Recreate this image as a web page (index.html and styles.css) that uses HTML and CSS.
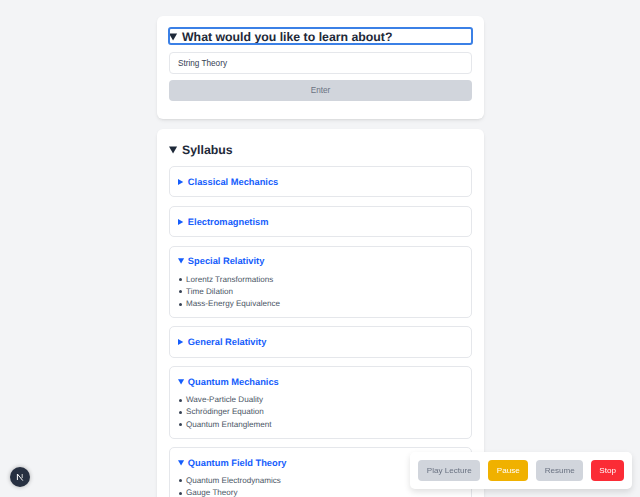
FILE: index.html
```html
<!DOCTYPE html>
<html lang="en">
<head>
<meta charset="utf-8">
<title>Lecture</title>
<link rel="stylesheet" href="styles.css">
</head>
<body>
<main class="page">
  <section class="card">
    <details open class="top">
      <summary class="heading focused">What would you like to learn about?</summary>
      <input class="topic" type="text" value="String Theory" aria-label="Topic">
      <button class="enter" type="button">Enter</button>
    </details>
  </section>
  <section class="card syllabus">
    <details open class="top">
      <summary class="heading">Syllabus</summary>
      <div class="items">
        <details class="item"><summary>Classical Mechanics</summary></details>
        <details class="item"><summary>Electromagnetism</summary></details>
        <details class="item" open><summary>Special Relativity</summary>
          <ul><li>Lorentz Transformations</li><li>Time Dilation</li><li>Mass-Energy Equivalence</li></ul>
        </details>
        <details class="item"><summary>General Relativity</summary></details>
        <details class="item" open><summary>Quantum Mechanics</summary>
          <ul><li>Wave-Particle Duality</li><li>Schrödinger Equation</li><li>Quantum Entanglement</li></ul>
        </details>
        <details class="item" open><summary>Quantum Field Theory</summary>
          <ul><li>Quantum Electrodynamics</li><li>Gauge Theory</li></ul>
        </details>
      </div>
    </details>
  </section>
</main>
<div class="controls">
  <button class="ctl grey" type="button">Play Lecture</button>
  <button class="ctl amber" type="button">Pause</button>
  <button class="ctl grey" type="button">Resume</button>
  <button class="ctl red" type="button">Stop</button>
</div>
<div class="next-badge"><svg width="12" height="12" viewBox="0 0 12 12" aria-hidden="true"><path d="M3.4 9V3L8.8 9.6" fill="none" stroke="#fff" stroke-width="1"/><path d="M8.2 3V7" fill="none" stroke="#d5d5d5" stroke-width="1"/></svg></div>
</body>
</html>
```
FILE: styles.css
```css
* { box-sizing: border-box; }
html, body { margin: 0; height: 497px; overflow: hidden; }
body {
  background: #f3f4f6;
  font-family: "Liberation Sans", Arial, sans-serif;
  color: #1e2939;
  padding-left: 1px;
  text-rendering: geometricPrecision;
}
.page { width: 327px; margin: 0 auto; padding-top: 16px; display: flex; flex-direction: column; gap: 10px; }
.card {
  background: #fff;
  border-radius: 6px;
  padding: 12px 12px 18.5px;
  box-shadow: 0 2px 4px -1px rgba(0,0,0,.1), 0 1px 3px -1px rgba(0,0,0,.08);
}
.heading {
  font-size: 12.3px;
  line-height: 16px;
  padding-top: 1px;
  height: 16px;
  font-weight: 700;
  cursor: pointer;
  margin-bottom: 8px;
}
.focused { outline: 2px solid #3b80e6; outline-offset: -1px; border-radius: 2px; }
.syllabus .heading { margin-bottom: 9px; }
.topic {
  display: block; width: 100%; height: 21.5px;
  border: 1px solid #e5e7eb; border-radius: 4px;
  padding: 1px 8px 0;
  font: 8.2px "Liberation Sans", Arial, sans-serif;
  color: #364153;
  margin-bottom: 6.5px;
}
.enter {
  display: block; width: 100%; height: 20.5px;
  border: 0; border-radius: 4px;
  background: #d1d5dc; color: #6a7282;
  font: 8.2px "Liberation Sans", Arial, sans-serif;
}
.items { display: flex; flex-direction: column; gap: 8.4px; }
.item { border: 1px solid #e5e7eb; border-radius: 5px; padding: 8.7px 8px 7.3px; }
.item summary { font-size: 9.3px; line-height: 13.5px; font-weight: 700; color: #155dfc; cursor: pointer; }
.item ul { margin: 4.6px 0 -.4px; padding: 0 0 0 .5px; list-style: none; font-size: 8.1px; line-height: 12.2px; color: #4a5565; }
.item li { display: flex; align-items: center; gap: 4.5px; }
.item li::before { content: ""; width: 3px; height: 3px; border-radius: 50%; background: #364153; }
.controls {
  position: fixed; right: 8px; bottom: 8px;
  display: flex; gap: 8px; padding: 8px;
  background: #fff; border-radius: 5px;
  box-shadow: 0 3px 6px rgba(0,0,0,.12);
}
.ctl { height: 21px; padding: 0 8.5px; border: 0; border-radius: 4px; font: 8.1px "Liberation Sans", Arial, sans-serif; }
.grey { background: #d1d5dc; color: #6a7282; }
.amber { background: #f0b100; color: #fff; }
.red { background: #fb2c36; color: #fff; padding: 0 8px; }
.next-badge {
  position: fixed; left: 10px; bottom: 10px; width: 20px; height: 20px; border-radius: 50%;
  background: #273041; display: flex; align-items: center; justify-content: center;
  box-shadow: 0 0 4px rgba(0,0,0,.3);
}
```
